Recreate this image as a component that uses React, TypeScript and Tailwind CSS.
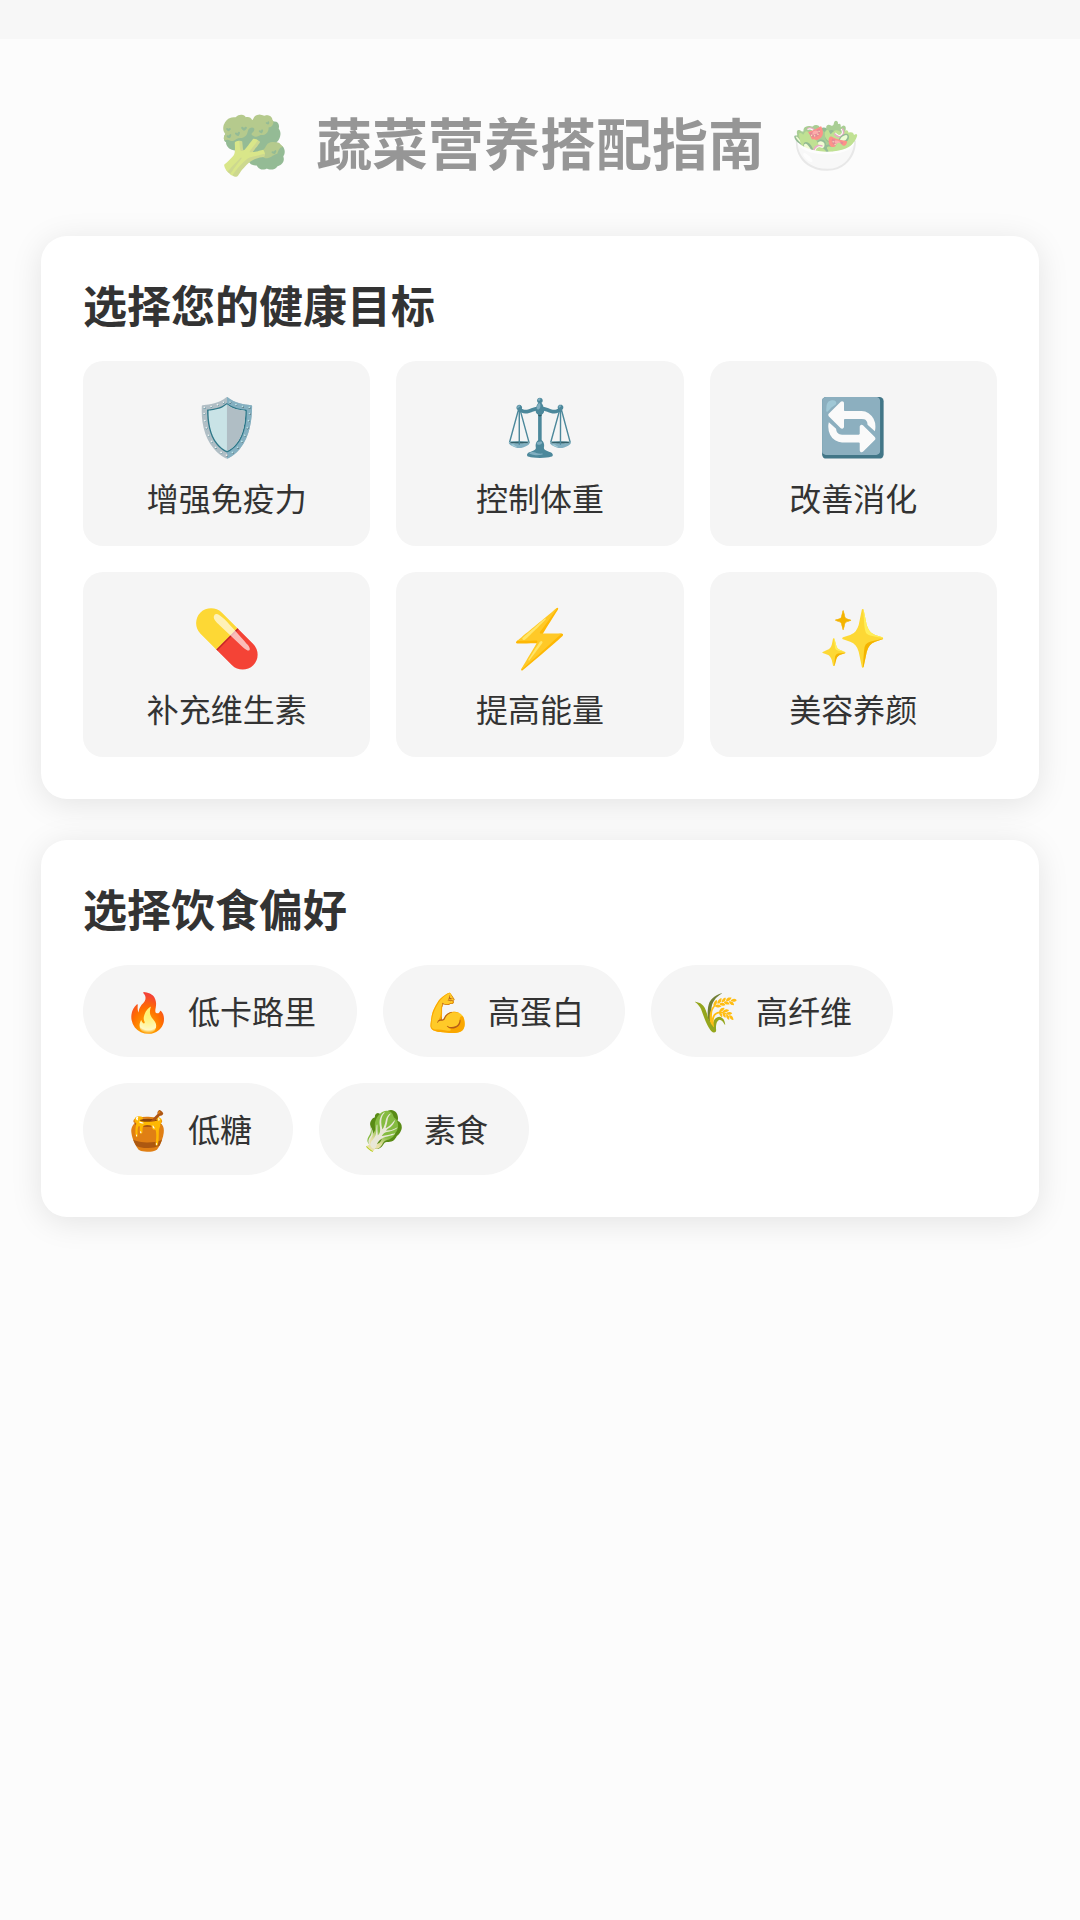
const goals = [
  { icon: '🛡️', label: '增强免疫力' },
  { icon: '⚖️', label: '控制体重' },
  { icon: '🔄', label: '改善消化' },
  { icon: '💊', label: '补充维生素' },
  { icon: '⚡', label: '提高能量' },
  { icon: '✨', label: '美容养颜' },
];

const preferences = [
  { icon: '🔥', label: '低卡路里' },
  { icon: '💪', label: '高蛋白' },
  { icon: '🌾', label: '高纤维' },
  { icon: '🍯', label: '低糖' },
  { icon: '🥬', label: '素食' },
];

export default function App() {
  return (
    <div className="min-h-screen bg-[#fcfcfc] font-['Noto_Sans_CJK_SC',sans-serif] text-[#333]">
      <div className="h-[39px] bg-[#f7f7f7]" />
      <main className="px-[41px] pt-[63px]">
        <h1 className="mb-[56px] flex items-center justify-center gap-[27px] text-[56px] leading-[78px] font-bold opacity-50">
          <span>🥦</span>
          <span>蔬菜营养搭配指南</span>
          <span>🥗</span>
        </h1>

        <section className="mb-[41px] rounded-[26px] bg-white p-[42px] shadow-[0_5px_32px_rgba(0,0,0,0.1)]">
          <h2 className="mb-[31px] text-[44px] leading-[52px] font-bold">选择您的健康目标</h2>
          <div className="grid grid-cols-3 gap-[26px]">
            {goals.map((goal) => (
              <button key={goal.label} className="flex flex-col items-center rounded-[20px] bg-[#f5f5f5] py-[26px]">
                <span className="mb-[16px] text-[56px] leading-[72px]">{goal.icon}</span>
                <span className="text-[32px] leading-[45px]">{goal.label}</span>
              </button>
            ))}
          </div>
        </section>

        <section className="rounded-[26px] bg-white p-[42px] shadow-[0_5px_32px_rgba(0,0,0,0.1)]">
          <h2 className="mb-[31px] text-[44px] leading-[52px] font-bold">选择饮食偏好</h2>
          <div className="flex flex-wrap gap-[26px]">
            {preferences.map((item) => (
              <button key={item.label} className="flex items-center gap-[17px] rounded-full bg-[#f5f5f5] px-[41px] pt-[19px] pb-[21px] text-[32px] leading-[52px]">
                <span className="text-[38px]">{item.icon}</span>
                <span>{item.label}</span>
              </button>
            ))}
          </div>
        </section>
      </main>
    </div>
  );
}
